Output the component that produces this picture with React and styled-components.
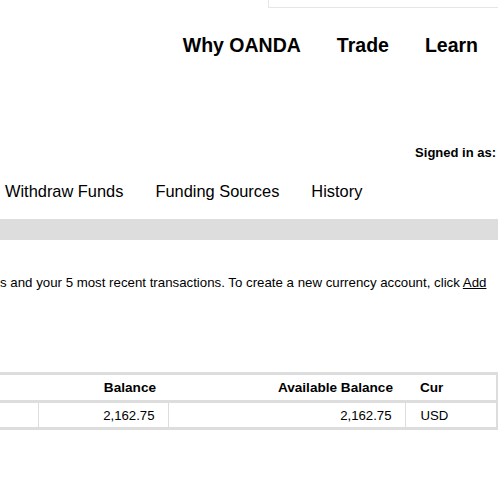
import React from "react";
import styled, { createGlobalStyle } from "styled-components";

const GlobalStyle = createGlobalStyle`
  html, body {
    margin: 0;
    padding: 0;
    background: #ffffff;
    overflow: hidden;
  }
  body {
    font-family: "Liberation Sans", Arial, sans-serif;
    color: #000000;
  }
`;

const Page = styled.div`
  width: 498px;
  height: 497px;
  display: flex;
  flex-direction: column;
  overflow: hidden;
`;

const LoginBox = styled.div`
  margin-left: 268px;
  height: 7px;
  border-left: 1px solid #e6e6e6;
  border-bottom: 1px solid #e6e6e6;
`;

const MainNav = styled.nav`
  margin-top: 26px;
  display: flex;
  justify-content: flex-end;
  gap: 36px;
  padding-right: 20px;
`;

const NavLink = styled.a`
  font-size: 19.5px;
  line-height: 22px;
  font-weight: bold;
  color: #000;
  text-decoration: none;
`;

const SignedIn = styled.div`
  margin-top: 89px;
  text-align: right;
  padding-right: 2px;
  font-size: 13px;
  line-height: 16px;
  font-weight: bold;
`;

const Tabs = styled.div`
  margin-top: 20px;
  display: flex;
  gap: 32px;
  padding-left: 5px;
`;

const Tab = styled.a`
  font-size: 16.4px;
  line-height: 20px;
  color: #000;
  text-decoration: none;
  white-space: nowrap;
`;

const GrayBar = styled.div`
  margin-top: 18px;
  height: 21px;
  background: #dddddd;
`;

const Intro = styled.p`
  margin: 35px 0 0;
  font-size: 13.27px;
  line-height: 16px;
  white-space: nowrap;
  overflow: hidden;
`;

const AddLink = styled.a`
  color: #000;
  text-decoration: underline;
`;

const Accounts = styled.table`
  margin-top: 81px;
  width: 498px;
  table-layout: fixed;
  border-collapse: collapse;
  border-top: 3px solid #dddddd;
  border-right: 2px solid #dddddd;
  font-size: 13px;
`;

const HeadCell = styled.th`
  height: 25px;
  padding: 0 ${(p) => (p.$right ? "12px" : "15px")};
  text-align: ${(p) => (p.$right ? "right" : "left")};
  font-size: 13.6px;
  font-weight: bold;
  line-height: 15px;
  border-bottom: 3px solid #dddddd;
`;

const Cell = styled.td`
  height: 24px;
  padding: 0 ${(p) => (p.$right ? "13px" : "15px")};
  text-align: ${(p) => (p.$right ? "right" : "left")};
  font-size: 13.2px;
  line-height: 15px;
  border-left: 1px solid #dddddd;
  border-bottom: 3px solid #dddddd;
  &:first-child {
    border-left: none;
  }
`;

const accounts = [{ id: 1, balance: "2,162.75", available: "2,162.75", currency: "USD" }];

export default function App() {
  return (
    <Page>
      <GlobalStyle />
      <LoginBox />
      <MainNav>
        <NavLink href="#">Why OANDA</NavLink>
        <NavLink href="#">Trade</NavLink>
        <NavLink href="#">Learn</NavLink>
      </MainNav>
      <SignedIn>Signed in as:</SignedIn>
      <Tabs>
        <Tab href="#">Withdraw Funds</Tab>
        <Tab href="#">Funding Sources</Tab>
        <Tab href="#">History</Tab>
      </Tabs>
      <GrayBar />
      <Intro>
        s and your 5 most recent transactions. To create a new currency account, click{" "}
        <AddLink href="#">Add</AddLink>
      </Intro>
      <Accounts>
        <colgroup>
          <col style={{ width: 38 }} />
          <col style={{ width: 130 }} />
          <col style={{ width: 237 }} />
          <col />
        </colgroup>
        <thead>
          <tr>
            <HeadCell />
            <HeadCell $right>Balance</HeadCell>
            <HeadCell $right>Available Balance</HeadCell>
            <HeadCell>Cur</HeadCell>
          </tr>
        </thead>
        <tbody>
          {accounts.map((a) => (
            <tr key={a.id}>
              <Cell />
              <Cell $right>{a.balance}</Cell>
              <Cell $right>{a.available}</Cell>
              <Cell>{a.currency}</Cell>
            </tr>
          ))}
        </tbody>
      </Accounts>
    </Page>
  );
}
